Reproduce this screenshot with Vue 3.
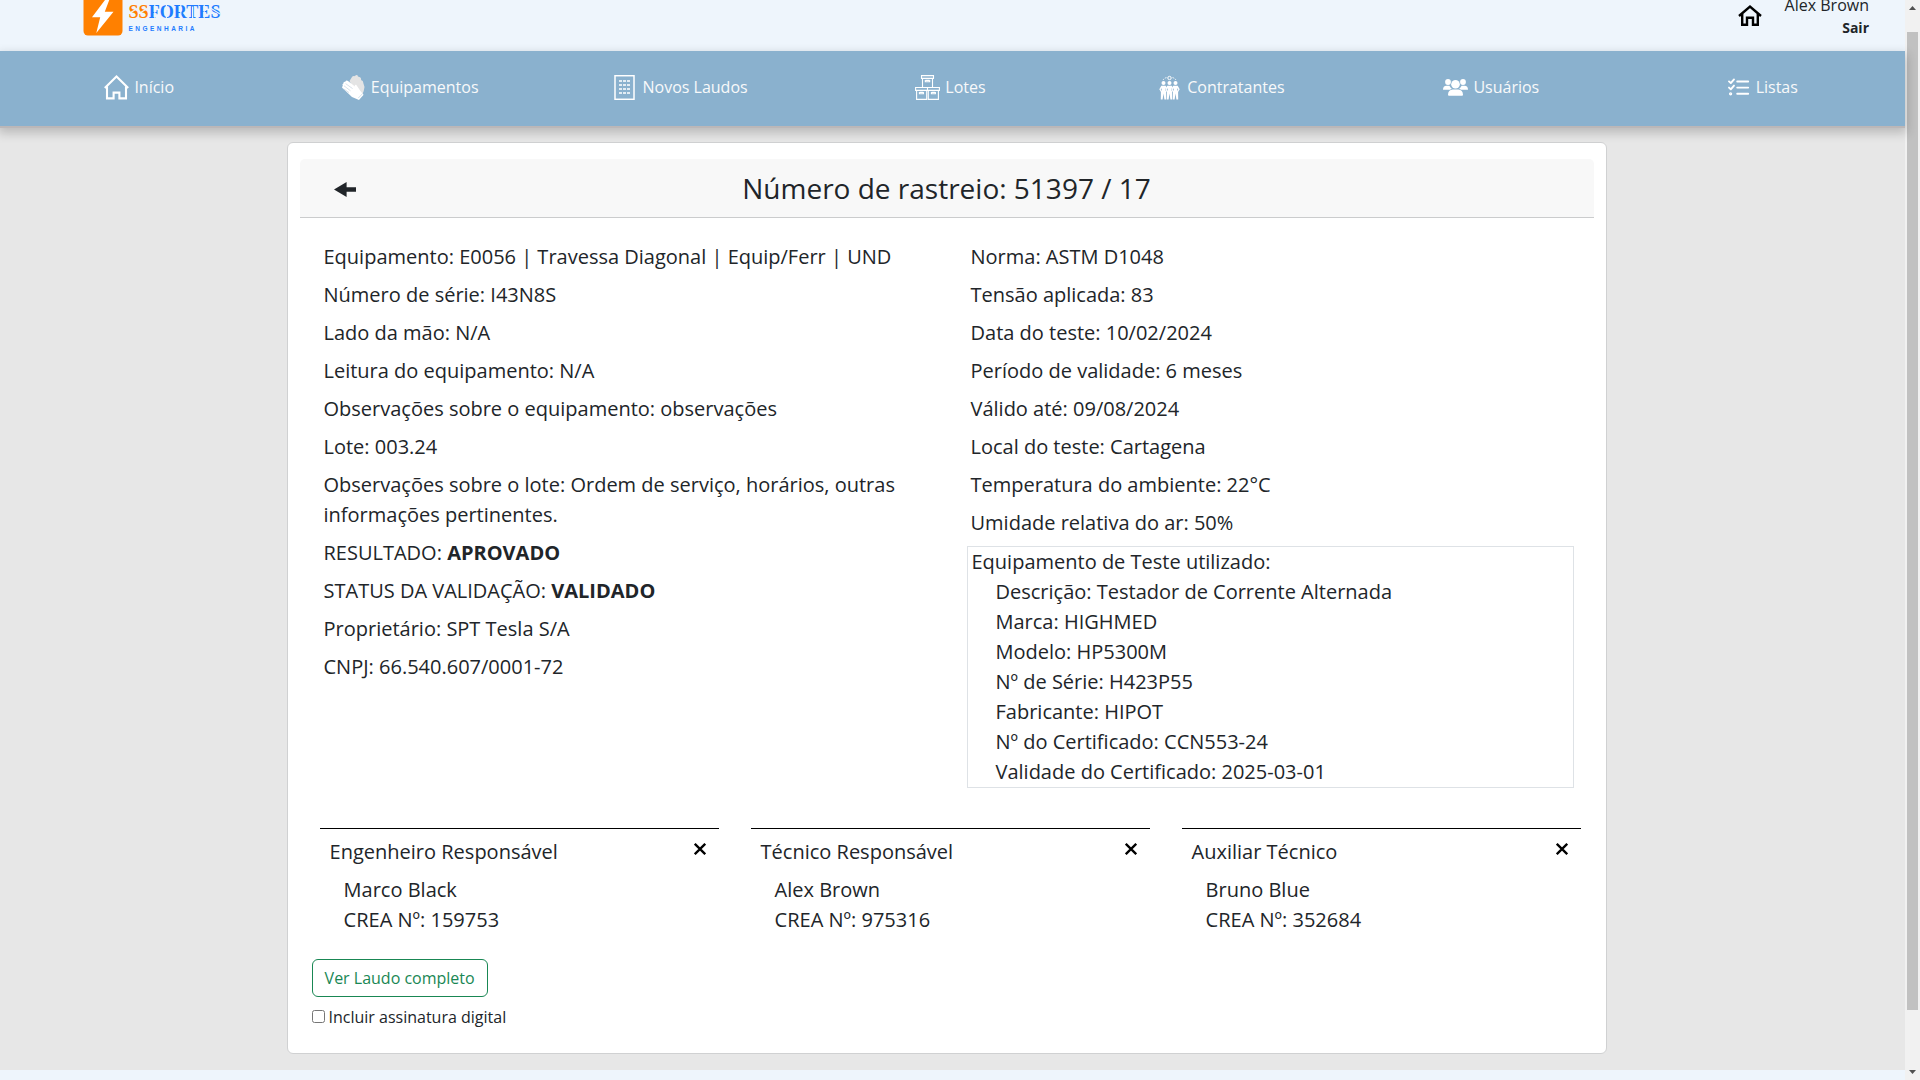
<script setup>
const navItems = [
  { id: 'home', label: 'Início' },
  { id: 'gloves', label: 'Equipamentos' },
  { id: 'report', label: 'Novos Laudos' },
  { id: 'boxes', label: 'Lotes' },
  { id: 'people', label: 'Contratantes' },
  { id: 'users', label: 'Usuários' },
  { id: 'list', label: 'Listas' },
]

const equipmentLines = [
  { label: 'Equipamento:', value: 'E0056 | Travessa Diagonal | Equip/Ferr | UND' },
  { label: 'Número de série:', value: 'I43N8S' },
  { label: 'Lado da mão:', value: 'N/A' },
  { label: 'Leitura do equipamento:', value: 'N/A' },
  { label: 'Observações sobre o equipamento:', value: 'observações' },
  { label: 'Lote:', value: '003.24' },
  { label: 'Observações sobre o lote:', value: 'Ordem de serviço, horários, outras informações pertinentes.' },
  { label: 'RESULTADO:', value: 'APROVADO', strong: true },
  { label: 'STATUS DA VALIDAÇÃO:', value: 'VALIDADO', strong: true },
  { label: 'Proprietário:', value: 'SPT Tesla S/A' },
  { label: 'CNPJ:', value: '66.540.607/0001-72' },
]

const testLines = [
  'Norma: ASTM D1048',
  'Tensão aplicada: 83',
  'Data do teste: 10/02/2024',
  'Período de validade: 6 meses',
  'Válido até: 09/08/2024',
  'Local do teste: Cartagena',
  'Temperatura do ambiente: 22°C',
  'Umidade relativa do ar: 50%',
]

const testerLines = [
  'Descrição: Testador de Corrente Alternada',
  'Marca: HIGHMED',
  'Modelo: HP5300M',
  'Nº de Série: H423P55',
  'Fabricante: HIPOT',
  'Nº do Certificado: CCN553-24',
  'Validade do Certificado: 2025-03-01',
]

const signers = [
  { role: 'Engenheiro Responsável', name: 'Marco Black', crea: '159753' },
  { role: 'Técnico Responsável', name: 'Alex Brown', crea: '975316' },
  { role: 'Auxiliar Técnico', name: 'Bruno Blue', crea: '352684' },
]
</script>

<template>
  <div class="window">
    <div class="page">
      <header class="topbar">
        <svg class="logo" width="140" height="36" viewBox="0 0 140 36">
          <rect x="0.5" y="-8" width="39" height="43.5" rx="4.5" fill="#ff8000" />
          <path d="M23.5 -2 L9 17.2 L17.2 17.2 L13.3 33 L30.5 11.8 L21.8 11.8 L27 -2 Z" fill="#fff" />
          <text class="brand" x="45.5" y="17.6" textLength="92" lengthAdjust="spacingAndGlyphs"><tspan fill="#ff8000">SS</tspan><tspan fill="#1f7cff">FORTES</tspan></text>
          <path d="M46 13.5 L55 8 M56 13.5 L65 8 M71.8 4 V19 M83.5 3 V20 M97.8 4 V19 M109.6 6.5 V19 M121.2 4 V19 M127.5 8 L137 14" stroke="#eef5fc" stroke-width="1.2" />
          <text class="brand-sub" x="45.5" y="30.5" textLength="66">ENGENHARIA</text>
        </svg>
        <div class="account">
          <svg class="home-link" width="24" height="22" viewBox="0 0 24 22" fill="none" stroke="#000" stroke-width="2.4">
            <path d="M1 11 L12 1.6 L23 11" />
            <path d="M4.2 9 V19.8 H9 V12.8 H15 V19.8 H19.8 V9" />
          </svg>
          <div class="user">
            <span>Alex Brown</span>
            <b>Sair</b>
          </div>
        </div>
      </header>

      <nav class="nav">
        <a v-for="item in navItems" :key="item.id" class="nav-item" :class="item.id">
          <svg width="25" height="25" viewBox="0 0 25 25">
            <g v-if="item.id === 'home'" fill="none" stroke="#fff" stroke-width="2.1">
              <path d="M0.8 12.9 L12.5 1.5 L24.2 12.9" />
              <path d="M3 11.2 V23.4 H9.6 V17.6 H15.4 V23.4 H22 V11.2" />
            </g>
            <g v-else-if="item.id === 'gloves'">
              <path d="M8.5 6 L11 2 Q12 .5 13.2 1.2 L15 .2 Q16.6 -.2 17 1.4 L19 2.2 Q20.5 3.2 20 5 Q22.5 5.6 22.3 8 L23.5 12 Q23 16 21.5 19 L12 13 Z" fill="#e4e4e4" />
              <path d="M1.4 13 Q.4 11.6 1.8 10.9 Q.8 9 2.4 8.6 Q2.2 6.4 4.2 6.8 Q5.4 4.8 7 6 L14 11.5 Q13.2 9.3 15.2 9.8 L19.4 16 L22.6 19.8 L18 25 L11 22 Z" fill="#fff" />
              <path d="M3 10.8 L9.5 15.8 M4.6 8.6 L11.6 13.6 M2.6 13.8 L8 17.6 M17.3 23 L21.4 18.8" stroke="#c5d4df" stroke-width=".7" fill="none" />
            </g>
            <g v-else-if="item.id === 'report'" fill="none" stroke="#fff">
              <rect x="3" y=".7" width="19" height="23.6" stroke-width="1.5" />
              <path d="M7 6 H18 M7 10 H18 M7 14 H18 M7 18 H18" stroke-width="1.5" stroke-dasharray="3 1" />
            </g>
            <g v-else-if="item.id === 'boxes'" fill="none" stroke="#fff" stroke-width="1.1">
              <path d="M6.5 .6 H18.5 V3.4 H6.5 Z M7.5 3.4 V12 M17.5 3.4 V12" />
              <path d="M.6 12.5 H24.4 V15.4 H.6 Z M1.6 15.4 V24.4 H11.7 V15.4 M13.3 15.4 V24.4 H23.4 V15.4 M12.5 12.5 V15.4" />
              <path d="M10.3 5 V6.8 H14.7 V5 M4.4 17 V18.7 H8.4 V17 M16.4 17 V18.7 H20.4 V17" />
              <path d="M10.5 5.4 H14.5 M4.6 17.4 H8.2 M16.6 17.4 H20.2" />
            </g>
            <g v-else-if="item.id === 'people'" fill="#fff">
              <circle cx="12.5" cy="3" r="1.7" fill="none" stroke="#fff" stroke-width="1" />
              <path d="M6 5 Q7.5 3 9.5 2.6 M15.5 2.6 Q17.5 3 19 5" fill="none" stroke="#fff" stroke-width=".9" stroke-dasharray="1.6 1" />
              <g v-for="x in [6.5, 12.5, 18.5]" :key="x">
                <circle :cx="x" cy="8" r="2" />
                <path :transform="`translate(${x} 0)`" d="M-2.2 10.8 H2.2 L4.2 14.2 L2.6 17 L2.7 24.4 H.9 L0 18.5 L-.9 24.4 H-2.7 L-2.6 17 L-4.2 14.2 Z" />
                <path :transform="`translate(${x} 0)`" d="M-2.1 13.6 V15.5 M2.1 13.6 V15.5" stroke="#8ab1ce" stroke-width=".8" />
              </g>
            </g>
            <g v-else-if="item.id === 'users'" fill="#fff">
              <circle cx="5" cy="7" r="2.9" />
              <circle cx="20" cy="7" r="2.9" />
              <circle cx="12.5" cy="9.3" r="4.3" />
              <path d="M0 14.8 Q0 11 3.5 10.8 H6.4 Q7.4 12.6 8.8 13.8 Q7.6 14.2 7 14.8 H.8 Z M25 14.8 Q25 11 21.5 10.8 H18.6 Q17.6 12.6 16.2 13.8 Q17.4 14.2 18 14.8 H24.2 Z" />
              <path d="M5 19.8 Q5.2 14.8 9.6 14.6 H15.4 Q19.8 14.8 20 19.8 Q20 20.8 19 20.8 H6 Q5 20.8 5 19.8 Z" />
            </g>
            <g v-else fill="none" stroke="#fff" stroke-width="1.9" stroke-linecap="round" stroke-linejoin="round">
              <path d="M11.2 6.5 H22.2 M11.2 12.6 H22.2 M11.2 18.8 H22.2" />
              <path d="M3 6.4 L4.8 8.1 L8 4.4 M3 12.6 L4.8 14.3 L8 10.6" />
              <circle cx="4.6" cy="18.8" r=".7" />
            </g>
          </svg>
          <span>{{ item.label }}</span>
        </a>
      </nav>

      <main class="content">
        <section class="card">
          <div class="card-head">
            <svg class="back" width="22" height="15" viewBox="0 0 22 15" fill="#212529">
              <path d="M0 7.5 L12.6 0 V5.3 H22 V9.7 H12.6 V15 Z" />
            </svg>
            <h3>Número de rastreio: 51397 / 17</h3>
          </div>

          <div class="details">
            <div class="col">
              <p v-for="line in equipmentLines" :key="line.label">
                {{ line.label }} <b v-if="line.strong">{{ line.value }}</b><template v-else>{{ line.value }}</template>
              </p>
            </div>
            <div class="col">
              <p v-for="line in testLines" :key="line">{{ line }}</p>
              <div class="tester">
                <div>Equipamento de Teste utilizado:</div>
                <ul>
                  <li v-for="line in testerLines" :key="line">{{ line }}</li>
                </ul>
              </div>
            </div>
          </div>

          <div class="signers">
            <div v-for="signer in signers" :key="signer.role" class="signer">
              <div class="signer-head">
                <span>{{ signer.role }}</span>
                <svg width="12" height="12" viewBox="0 0 12 12" stroke="#000" stroke-width="2.3">
                  <path d="M.8 .8 L11.2 11.2 M11.2 .8 L.8 11.2" />
                </svg>
              </div>
              <div class="signer-body">
                <div>{{ signer.name }}</div>
                <div>CREA Nº: {{ signer.crea }}</div>
              </div>
            </div>
          </div>

          <div class="actions">
            <button type="button">Ver Laudo completo</button>
            <label><input type="checkbox" /><span>Incluir assinatura digital</span></label>
          </div>
        </section>
      </main>
      <footer class="footer"></footer>
    </div>

    <div class="scrollbar">
      <svg width="15" height="32" viewBox="0 0 15 32"><path d="M4 10 L7.5 6 L11 10 Z" fill="#505050" /></svg>
      <div class="thumb"></div>
      <svg width="15" height="15" viewBox="0 0 15 15"><path d="M4 5 L7.5 9 L11 5 Z" fill="#505050" /></svg>
    </div>
  </div>
</template>

<style>
body {
  margin: 0;
  overflow: hidden;
}
</style>

<style scoped>
* {
  box-sizing: border-box;
}
.window {
  display: flex;
  width: 1920px;
  height: 1080px;
  overflow: hidden;
  font-family: "Open Sans", "Noto Sans", sans-serif;
  font-size: 16px;
  line-height: 1.5;
  color: #212529;
}
.page {
  width: 1905px;
  display: flex;
  flex-direction: column;
  background: #e7e7e7;
}
.topbar {
  height: 51px;
  flex: none;
  display: flex;
  justify-content: space-between;
  align-items: flex-start;
  padding: 0 36px 0 83px;
  background: #eef5fc;
}
.logo {
  display: block;
}
.brand {
  font: 700 19.3px "Liberation Serif", serif;
}
.brand-sub {
  font: 700 6.5px "Liberation Sans", sans-serif;
  fill: #1f7cff;
}
.account {
  display: flex;
  align-items: flex-start;
}
.home-link {
  margin: 5px 23px 0 0;
}
.user {
  display: flex;
  flex-direction: column;
  align-items: flex-end;
  margin-top: -7px;
}
.user b {
  font-size: 14px;
  line-height: 21px;
}
.nav {
  position: relative;
  height: 75px;
  flex: none;
  display: flex;
  padding: 0 8px 3px 4px;
  background: #8ab1ce;
  box-shadow: 0 2px 0 #bbb7b8, 0 5px 10px 2px rgba(0, 0, 0, 0.2);
}
.nav-item {
  flex: 1 1 0;
  display: flex;
  align-items: center;
  justify-content: center;
  gap: 5px;
  color: #f8f9fa;
}
.content {
  flex: none;
  height: 944px;
  padding: 16px 298px 0 287px;
}
.card {
  height: 912px;
  padding: 16px 12px 0;
  background: #fff;
  border: 1px solid #d0d1d2;
  border-radius: 6px;
}
.card-head {
  display: flex;
  align-items: center;
  height: 59px;
  padding: 2px 34px 0;
  background: #f8f8f8;
  border-bottom: 1px solid #cbcccd;
  border-radius: 5px 5px 0 0;
}
.card-head h3 {
  flex: 1;
  margin: 0 23px 0 0;
  text-align: center;
  font-size: 28px;
  font-weight: 400;
  line-height: 1.2;
}
.details {
  display: grid;
  grid-template-columns: 1fr 1fr;
  height: 610px;
  padding-top: 24px;
  font-size: 20px;
  line-height: 30px;
}
.col {
  padding: 0 20px 0 23.5px;
}
.col p {
  margin: 0 0 8px;
}
.tester {
  margin: 0 0 0 -3.5px;
  padding-left: 3.5px;
  border: 1px solid #dee2e6;
}
.tester ul {
  margin: 0;
  padding: 0 0 0 24px;
  list-style: none;
}
.signers {
  display: grid;
  grid-template-columns: repeat(3, 399px);
  column-gap: 32px;
  padding-left: 20px;
  font-size: 20px;
  line-height: 30px;
}
.signer {
  border-top: 1px solid #000;
}
.signer-head {
  display: flex;
  justify-content: space-between;
  padding: 8px 13px 8px 9.6px;
}
.signer-head svg {
  margin-top: 6px;
}
.signer-body {
  padding-left: 23.6px;
}
.actions {
  display: flex;
  flex-direction: column;
  align-items: flex-start;
  padding: 24px 0 0 12px;
}
.actions button {
  height: 38px;
  padding: 0 12.4px 0 11.6px;
  font: inherit;
  color: #198754;
  background: transparent;
  border: 1px solid #198754;
  border-radius: 6px;
}
.actions label {
  display: flex;
  align-items: center;
  margin-top: 8px;
}
.actions input {
  width: 13px;
  height: 13px;
  margin: 0 3.5px 2px 0;
}
.footer {
  flex: 1;
  background: #eef5fc;
}
.scrollbar {
  width: 15px;
  display: flex;
  flex-direction: column;
  align-items: center;
  background: #f1f1f1;
}
.scrollbar svg {
  display: block;
  flex: none;
}
.thumb {
  width: 11px;
  height: 978px;
  margin-bottom: 55px;
  background: #c1c1c1;
}
</style>
